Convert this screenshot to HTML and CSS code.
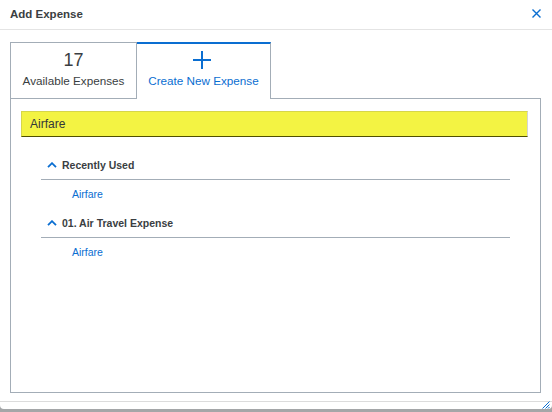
FILE: index.html
```html
<!DOCTYPE html>
<html>
<head>
<meta charset="utf-8">
<link rel="stylesheet" href="styles.css">
</head>
<body>
<div class="dialog">
  <div class="header">
    <span class="title">Add Expense</span>
    <svg class="close" width="9" height="9" viewBox="0 0 9 9"><path d="M0.5 0.5 L8.5 8.5 M8.5 0.5 L0.5 8.5" stroke="#0a6ed1" stroke-width="1.4" fill="none"/></svg>
  </div>
  <div class="content">
    <div class="tabs">
      <div class="tab tab-count">
        <div class="tab-top count">17</div>
        <div class="tab-label">Available Expenses</div>
      </div>
      <div class="tab tab-active">
        <div class="tab-top"><svg width="20" height="20" viewBox="0 0 20 20"><path d="M10 1 V19 M1 10 H19" stroke="#0a6ed1" stroke-width="2" fill="none"/></svg></div>
        <div class="tab-label">Create New Expense</div>
      </div>
    </div>
    <div class="panel">
      <div class="search">Airfare</div>
      <div class="list">
        <div class="group-head"><svg class="chev" width="10" height="6" viewBox="0 0 10 6"><path d="M1 5.2 L5 1.2 L9 5.2" stroke="#0a6ed1" stroke-width="1.8" fill="none"/></svg><span>Recently Used</span></div>
        <div class="item">Airfare</div>
        <div class="group-head"><svg class="chev" width="10" height="6" viewBox="0 0 10 6"><path d="M1 5.2 L5 1.2 L9 5.2" stroke="#0a6ed1" stroke-width="1.8" fill="none"/></svg><span>01. Air Travel Expense</span></div>
        <div class="item">Airfare</div>
      </div>
    </div>
  </div>
  <div class="footer">
    <svg class="grip" width="8" height="8" viewBox="0 0 8 8"><path d="M7.5 0.5 L0.5 7.5 M7.5 3.5 L3.5 7.5 M7.5 6 L6 7.5" stroke="#0a6ed1" stroke-width="1" fill="none"/></svg>
  </div>
</div>
</body>
</html>
```

FILE: styles.css
```css
* { box-sizing: border-box; }
html, body { margin: 0; padding: 0; }
body {
  background: #a4a6a8;
  font-family: "Liberation Sans", Arial, sans-serif;
  color: #32363a;
  width: 552px;
  height: 412px;
  overflow: hidden;
}
.dialog {
  width: 552px;
  height: 409px;
  background: #ffffff;
  border-radius: 0 0 4px 4px;
  display: flex;
  flex-direction: column;
}
.header {
  height: 30px;
  border-bottom: 1px solid #e4e4e4;
  display: flex;
  align-items: center;
  justify-content: space-between;
  padding: 0 11px 2px 10px;
}
.title {
  font-size: 11.5px;
  font-weight: bold;
  color: #3a3e42;
}
.close { display: block; }
.content {
  padding: 12px 11px 0 10px;
  flex: 1;
  display: flex;
  flex-direction: column;
}
.tabs {
  display: flex;
  margin-bottom: -1px;
}
.tab {
  height: 57px;
  display: flex;
  flex-direction: column;
  align-items: center;
  background: #fff;
}
.tab-count {
  width: 127px;
  border: 1px solid #a3adb7;
  border-bottom: none;
  padding-top: 7px;
}
.tab-active {
  width: 134px;
  border-top: 2px solid #0a6ed1;
  border-right: 1px solid #a3adb7;
  padding-top: 6px;
  position: relative;
  z-index: 1;
}
.tab-top {
  height: 20px;
  line-height: 20px;
  display: flex;
  align-items: center;
  justify-content: center;
}
.count {
  font-size: 18px;
  color: #3a3e42;
}
.tab-label {
  margin-top: 4px;
  font-size: 11.7px;
  line-height: 14px;
  color: #3a3e42;
  white-space: nowrap;
}
.tab-active .tab-label { color: #0a6ed1; }
.tab-active .tab-top svg { display: block; margin-left: -3px; }
.panel {
  width: 531px;
  height: 295px;
  border: 1px solid #a3adb7;
  padding: 12px 12px 0 10px;
}
.search {
  height: 26px;
  background: #f3f343;
  border-top: 1px solid #d6d64a;
  border-left: 1px solid #d6d64a;
  border-right: 1px solid #d4d4d4;
  border-bottom: 1px solid #4f4f00;
  font-size: 12px;
  line-height: 24px;
  padding-left: 8px;
  color: #32363a;
}
.list {
  margin: 13px 18px 0 20px;
}
.group-head {
  height: 30px;
  border-bottom: 1px solid #a3adb7;
  display: flex;
  align-items: center;
  padding-left: 6px;
  font-size: 10.5px;
  font-weight: bold;
  color: #3a3e42;
}
.chev { display: block; margin-right: 5px; }
.item {
  height: 28px;
  line-height: 28px;
  padding-left: 31px;
  font-size: 10.5px;
  color: #0a6ed1;
}
.footer {
  margin-top: 8px;
  height: 8px;
  border-top: 1px solid #dcdcdc;
  display: flex;
  justify-content: flex-end;
  align-items: flex-end;
  padding-right: 2px;
}
.grip { display: block; margin-top: -2px; }
```
